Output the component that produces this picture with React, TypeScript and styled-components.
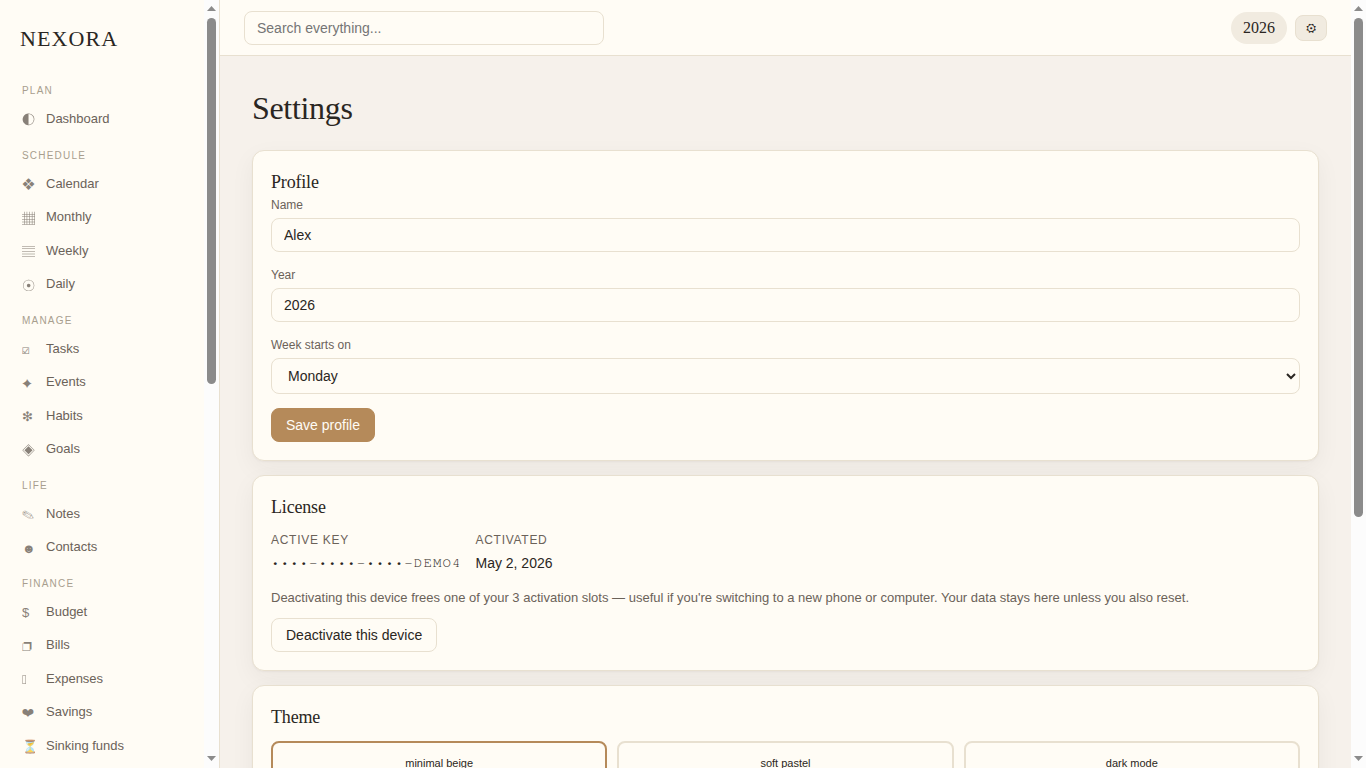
import React from "react";
import styled, { createGlobalStyle } from "styled-components";

const c = {
  bg: "#f6f1eb",
  surface: "#fffcf5",
  soft: "#f1ebe0",
  border: "#e8e0d0",
  text: "#2a2622",
  muted: "#6b6259",
  faint: "#a89e8e",
  accent: "#b58a5a",
};
const sans = '"Liberation Sans", Arial, sans-serif';
const serif = '"Liberation Serif", Georgia, serif';

const Global = createGlobalStyle`
  *, *::before, *::after { box-sizing: border-box; }
  body { margin: 0; background: ${c.bg}; color: ${c.text}; font: 14px/1.5 ${sans}; overflow: hidden; }
  h1, h3, p { margin: 0; font-weight: 400; }
`;

const Shell = styled.div`
  display: flex;
  height: 100vh;
  overflow: hidden;
`;
const Sidebar = styled.aside`
  display: flex;
  flex: none;
  width: 220px;
  background: ${c.surface};
  border-right: 1px solid ${c.border};
`;
const SidebarBody = styled.div`
  flex: 1;
  min-width: 0;
  overflow: hidden;
  padding: 22px 12px 0;
`;
const Brand = styled.div`
  padding: 0 8px;
  font: 22px/33px ${serif};
  letter-spacing: 0.05em;
`;
const Nav = styled.nav`
  padding-top: 21px;
`;
const Group = styled.div`
  padding-bottom: 5px;
`;
const GroupLabel = styled.div`
  height: 26.4px;
  padding: 7px 10px 0;
  font-size: 10px;
  line-height: 15px;
  letter-spacing: 0.12em;
  text-transform: uppercase;
  color: ${c.faint};
`;
const NavItem = styled.a`
  display: flex;
  align-items: center;
  gap: 10px;
  height: 33.4px;
  padding: 0 10px;
  font-size: 13px;
  line-height: 20px;
  color: ${c.muted};
`;
const Glyph = styled.span<{ $face?: string; $drop?: number }>`
  width: 14px;
  height: 18px;
  padding-top: ${(p) => p.$drop ?? 0}px;
  line-height: 20px;
  white-space: nowrap;
  opacity: 0.8;
  ${(p) => p.$face && `font-family: "${p.$face}", ${sans};`}
`;

const Track = styled.div`
  display: flex;
  flex: none;
  flex-direction: column;
  align-items: center;
  width: 15px;
  height: 100vh;
  padding: 6px 0 7px;
  background: #fcfcfc;
`;
const Arrow = styled.i<{ $down?: boolean }>`
  width: 9px;
  height: 5px;
  background: #8b8b8b;
  clip-path: ${(p) => (p.$down ? "polygon(0 0, 100% 0, 50% 100%)" : "polygon(50% 0, 100% 100%, 0 100%)")};
`;
const Thumb = styled.div<{ $size: number }>`
  width: 9px;
  height: ${(p) => p.$size}px;
  margin: 7px 0 auto;
  border-radius: 5px;
  background: #8b8b8b;
`;
const Scrollbar = ({ size }: { size: number }) => (
  <Track>
    <Arrow />
    <Thumb $size={size} />
    <Arrow $down />
  </Track>
);

const Page = styled.div`
  flex: 1;
  min-width: 0;
`;
const Topbar = styled.header`
  display: flex;
  align-items: center;
  gap: 8px;
  height: 56px;
  padding: 0 24px;
  background: ${c.surface};
  border-bottom: 1px solid ${c.border};
`;
const Input = styled.input`
  display: block;
  width: 100%;
  height: 34px;
  padding: 8px 12px;
  border: 1px solid ${c.border};
  border-radius: 8px;
  background: ${c.surface};
  color: ${c.text};
  font: 14px ${sans};
  outline: none;
`;
const Search = styled(Input)`
  width: 360px;
  margin-right: auto;
`;
const Select = styled.select`
  display: block;
  width: 100%;
  height: 36px;
  padding: 8px 12px;
  border: 1px solid ${c.border};
  border-radius: 8px;
  background: ${c.surface};
  color: ${c.text};
  font: 14px ${sans};
`;
const YearPill = styled.span`
  padding: 4px 12px;
  border-radius: 999px;
  background: ${c.soft};
  font: 16px/24px ${serif};
`;
const IconButton = styled.button`
  width: 32px;
  height: 26px;
  padding: 2px 0 0;
  border: 1px solid ${c.border};
  border-radius: 8px;
  background: ${c.soft};
  color: ${c.text};
  font: 12px FreeSans, ${sans};
`;

const Main = styled.main`
  padding: 33px 32px 32px;
`;
const Title = styled.h1`
  margin-bottom: 23px;
  font: 32px/38px ${serif};
  letter-spacing: -0.01em;
`;
const Card = styled.section`
  margin-bottom: 14px;
  padding: 18px;
  border: 1px solid ${c.border};
  border-radius: 12px;
  background: ${c.surface};
  box-shadow: 0 1px 2px rgba(42, 38, 34, 0.04), 0 8px 24px rgba(42, 38, 34, 0.05);
`;
const CardTitle = styled.h3`
  font: 18px/27px ${serif};
  letter-spacing: -0.01em;
`;
const Field = styled.label`
  display: flex;
  flex-direction: column;
  gap: 4px;
  margin-bottom: 14px;
  font-size: 12px;
  line-height: 18px;
  color: ${c.muted};
`;
const Button = styled.button<{ $primary?: boolean }>`
  display: block;
  height: 34px;
  padding: 0 14px;
  border: 1px solid ${(p) => (p.$primary ? c.accent : c.border)};
  border-radius: 8px;
  background: ${(p) => (p.$primary ? c.accent : c.surface)};
  color: ${(p) => (p.$primary ? c.surface : c.text)};
  font: 14px ${sans};
`;
const Facts = styled.div`
  display: flex;
  gap: 14px;
  margin: 10px 0 14px;
`;
const FactLabel = styled.div`
  margin-bottom: 4px;
  font-size: 12px;
  line-height: 18px;
  letter-spacing: 0.06em;
  text-transform: uppercase;
  color: ${c.muted};
`;
const FactValue = styled.div`
  height: 21px;
  line-height: 21px;
`;
const KeyValue = styled(FactValue)`
  font-family: FreeMono, "Liberation Mono", monospace;
  letter-spacing: 0.08em;
`;
const Dots = styled.span`
  margin: 0 -1.2px 0 1.2px;
  font-size: 10px;
  line-height: 1;
  letter-spacing: 3.52px;
  vertical-align: 1px;
`;
const Note = styled.p`
  margin-bottom: 10px;
  font-size: 13px;
  line-height: 20px;
  color: ${c.muted};
`;
const Themes = styled.div`
  display: grid;
  grid-template-columns: repeat(3, 1fr);
  gap: 10px;
  margin-top: 10px;
`;
const ThemeTile = styled.div<{ $active?: boolean }>`
  height: 90px;
  padding: 12px;
  border: 2px solid ${(p) => (p.$active ? c.accent : c.border)};
  border-radius: 8px;
  font-size: 11px;
  line-height: 16px;
  text-align: center;
`;

const zenHei = "WenQuanYi Zen Hei";
type Item = [glyph: string, label: string, face?: string, drop?: number];
const groups: [string, Item[]][] = [
  ["Plan", [["◐", "Dashboard", zenHei]]],
  [
    "Schedule",
    [
      ["❖", "Calendar", "IPAGothic"],
      ["▦", "Monthly", zenHei, 1],
      ["▤", "Weekly", zenHei],
      ["☉", "Daily", zenHei, 1],
    ],
  ],
  [
    "Manage",
    [
      ["☑", "Tasks", "FreeMono", 1],
      ["✦", "Events", "FreeSans", 2],
      ["❇", "Habits"],
      ["◈", "Goals", zenHei, 1],
    ],
  ],
  [
    "Life",
    [
      ["✎", "Notes", "FreeSans", 1],
      ["☻", "Contacts", undefined, 1],
    ],
  ],
  [
    "Finance",
    [
      ["$", "Budget"],
      ["❐", "Bills", "FreeSans", 2],
      ["\uE000", "Expenses", zenHei],
      ["❤", "Savings", "FreeSans", 2],
      ["⏳", "Sinking funds"],
    ],
  ],
];

export default function App() {
  return (
    <>
      <Global />
      <Shell>
        <Sidebar>
          <SidebarBody>
            <Brand>NEXORA</Brand>
            <Nav>
              {groups.map(([name, items]) => (
                <Group key={name}>
                  <GroupLabel>{name}</GroupLabel>
                  {items.map(([glyph, label, face, drop]) => (
                    <NavItem key={label}>
                      <Glyph $face={face} $drop={drop}>{glyph}</Glyph>
                      {label}
                    </NavItem>
                  ))}
                </Group>
              ))}
            </Nav>
          </SidebarBody>
          <Scrollbar size={366} />
        </Sidebar>
        <Page>
          <Topbar>
            <Search placeholder="Search everything..." />
            <YearPill>2026</YearPill>
            <IconButton>⚙</IconButton>
          </Topbar>
          <Main>
            <Title>Settings</Title>
            <Card>
              <CardTitle>Profile</CardTitle>
              <Field>Name<Input defaultValue="Alex" /></Field>
              <Field>Year<Input defaultValue="2026" /></Field>
              <Field>
                Week starts on
                <Select defaultValue="Monday">
                  <option>Monday</option>
                  <option>Sunday</option>
                </Select>
              </Field>
              <Button $primary>Save profile</Button>
            </Card>
            <Card>
              <CardTitle>License</CardTitle>
              <Facts>
                <div>
                  <FactLabel>Active key</FactLabel>
                  <KeyValue>
                    <Dots>••••</Dots>-<Dots>••••</Dots>-<Dots>••••</Dots>-DEMO4
                  </KeyValue>
                </div>
                <div>
                  <FactLabel>Activated</FactLabel>
                  <FactValue>May 2, 2026</FactValue>
                </div>
              </Facts>
              <Note>
                Deactivating this device frees one of your 3 activation slots — useful if you're switching to a new
                phone or computer. Your data stays here unless you also reset.
              </Note>
              <Button>Deactivate this device</Button>
            </Card>
            <Card>
              <CardTitle>Theme</CardTitle>
              <Themes>
                <ThemeTile $active>minimal beige</ThemeTile>
                <ThemeTile>soft pastel</ThemeTile>
                <ThemeTile>dark mode</ThemeTile>
              </Themes>
            </Card>
          </Main>
        </Page>
        <Scrollbar size={499} />
      </Shell>
    </>
  );
}
